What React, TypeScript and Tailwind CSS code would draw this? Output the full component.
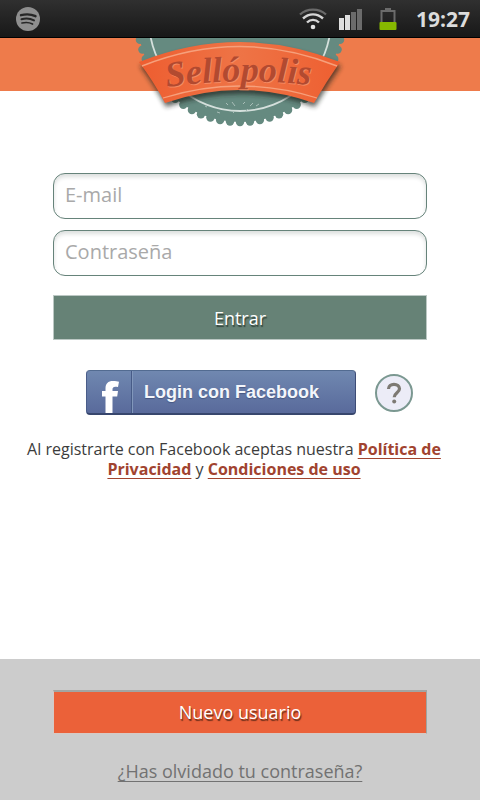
import React, { useState } from 'react';

const StatusBar = () => (
  <div className="flex h-[38px] shrink-0 items-center border-b border-black bg-linear-to-b from-[#303030] to-[#181818] pr-2.5 pl-4">
    <svg width="24" height="24" viewBox="0 0 24 24" fill="none" strokeLinecap="round">
      <circle cx="12" cy="12" r="12" fill="#8e8e8e" />
      <path d="M5 8.200C9.500 7 15.500 7.300 19.500 9.200" stroke="#262626" strokeWidth="2.400" />
      <path d="M5.500 12.300C9.500 11.200 14.500 11.600 18 13.400" stroke="#262626" strokeWidth="2" />
      <path d="M6 16C9.500 15.200 13.500 15.400 16.500 17" stroke="#262626" strokeWidth="1.700" />
    </svg>
    <div className="ml-auto flex items-center">
      <svg width="30" height="24" viewBox="0 0 30 24" fill="none">
        <path d="M2 7.500C9 1 21 1 28 7.500" stroke="#6a6a6a" strokeWidth="2.200" />
        <path d="M5 11.500C11 6 19 6 25 11.500" stroke="#d6d6d6" strokeWidth="2.400" />
        <path d="M9 15.500C12.500 12 17.500 12 21 15.500" stroke="#d6d6d6" strokeWidth="2.400" />
        <circle cx="15" cy="20" r="2.300" fill="#e2e2e2" />
      </svg>
      <svg className="ml-2.5" width="26" height="24" viewBox="0 0 26 24">
        <path d="M1 11h5v12H1zM7 8h5v15H7z" fill="#dedede" />
        <path d="M13 5h5v18h-5zM19 2h5v21h-5z" fill="#6b6b6b" />
      </svg>
      <svg className="ml-3.5" width="20" height="24" viewBox="0 0 20 24">
        <path d="M7 1h6v3H7z" fill="#6b6b6b" />
        <path d="M3.500 15V4h13v11" fill="none" stroke="#6b6b6b" strokeWidth="2" />
        <rect x="1.500" y="15" width="17" height="8" rx="1" fill="#86b800" />
      </svg>
      <span className="ml-[18px] text-[21px] leading-6 font-bold text-[#dcdcdc]">19:27</span>
    </div>
  </div>
);

// scalloped edge of the stamp
const TEETH = Array.from({ length: 64 }, (_, i) => {
  const a = (i / 64) * Math.PI * 2;
  return { x: 110 + Math.cos(a) * 102, y: -18 + Math.sin(a) * 102 };
});

const RIBBON = 'M9 24Q110 -16 210 24Q196 44 184 65Q110 39 35 65Q24 44 9 24Z';

const Logo = () => (
  <svg width="220" height="96" viewBox="0 0 220 96" role="img" aria-label="Sellópolis">
    <defs>
      <linearGradient id="ribbon" x1="0" x2="1">
        <stop offset="0" stopColor="#ee5d30" />
        <stop offset="0.500" stopColor="#ee7446" />
        <stop offset="1" stopColor="#ee5f31" />
      </linearGradient>
      <filter id="shade" x="-20%" y="-20%" width="140%" height="150%">
        <feGaussianBlur stdDeviation="2.500" />
      </filter>
      <path id="arc" d="M37 49Q110 38 198 49" />
    </defs>
    <g fill="#658a80">
      <circle cx="110" cy="-18" r="102" />
      {TEETH.map((t, i) => (
        <circle key={i} cx={t.x} cy={t.y} r="4.200" />
      ))}
    </g>
    <circle cx="110" cy="-18" r="91" fill="none" stroke="#d5e0dc" strokeWidth="1.800" />
    <path d="M96 65l2 2m4-3l3 4m8-2l2-2m5 4l3-3m-36 9l3 1m12-2l2 2m11-1l3-3m8-3l3-2m-54 2l2 1" stroke="#a9beb8" strokeWidth="1" />
    <path d={RIBBON} transform="translate(1 4)" fill="#1c211f" opacity="0.700" filter="url(#shade)" />
    <path d={RIBBON} fill="url(#ribbon)" />
    <path d="M12 28Q110 -11 207 28" fill="none" stroke="#f6a07c" strokeWidth="1.500" />
    <path d="M33 60Q110 36 187 60" fill="none" stroke="#f6a07c" strokeWidth="1.300" />
    <g fontFamily="'Liberation Serif', serif" fontSize="36" fontStyle="italic" fontWeight="700">
      <text fill="#f68a62" transform="translate(1 1)">
        <textPath href="#arc">Sellópolis</textPath>
      </text>
      <text fill="#b24a30">
        <textPath href="#arc">Sellópolis</textPath>
      </text>
    </g>
  </svg>
);

const Field = ({ label, ...props }: any) => (
  <input
    aria-label={label}
    placeholder={label}
    className="h-[46px] w-full rounded-xl border border-[#66837a] bg-white px-[11px] pb-1 text-xl text-gray-700 shadow-[inset_0_3px_4px_#dcdfde] outline-none placeholder:text-[#a9a9a9]"
    {...props}
  />
);

const FacebookButton = () => (
  <button
    type="button"
    className="flex h-[45px] w-[270px] items-stretch overflow-hidden rounded-sm border border-t-[#526b91] border-r-[#3d4c76] border-b-2 border-b-[#37466d] border-l-[#4a5d89] bg-linear-to-b from-[#7088b0] to-[#596a9b] text-left"
  >
    <svg className="shrink-0" width="46" height="42" viewBox="0 0 46 42">
      <path d="M18.500 42V25.500H15V20h3.500v-2.500C18.500 12.500 21 10 26 10c2.500 0 4.500.3 6 .8l-1 5.200c-3.800-.8-5.500-.3-5.500 2.500V20H31l-.8 5.500h-4.700V42z" fill="#fff" />
      <path d="M44.500 0v42" stroke="#475b87" />
      <path d="M45.500 0v42" stroke="#8197bb" />
    </svg>
    <span className="self-center pl-[11px] font-['Liberation_Sans',sans-serif] text-lg font-bold text-[#f3f6fb] [text-shadow:0_1px_1px_#465782]">
      Login con Facebook
    </span>
  </button>
);

const App: React.FC = () => {
  const [email, setEmail] = useState('');
  const [password, setPassword] = useState('');

  return (
    <div className="flex min-h-screen flex-col bg-white font-['Open_Sans','Noto_Sans',sans-serif]">
      <StatusBar />

      <header className="relative h-[53px] shrink-0 bg-[#ee7b4b]">
        <div className="absolute inset-x-0 top-0 flex justify-center">
          <Logo />
        </div>
      </header>

      <main className="flex-1 pt-[82px] pb-8">
        <form className="flex flex-col px-[53px]" onSubmit={(e) => e.preventDefault()}>
          <div className="flex flex-col gap-[11px]">
            <Field label="E-mail" type="email" value={email} onChange={(e: any) => setEmail(e.target.value)} />
            <Field label="Contraseña" type="password" value={password} onChange={(e: any) => setPassword(e.target.value)} />
          </div>
          <button
            type="submit"
            className="mt-[19px] h-[45px] border border-[#bcc8c4] bg-[#668276] text-lg text-white [text-shadow:1px_2px_1px_#33443c]"
          >
            Entrar
          </button>
        </form>

        <div className="mt-[30px] flex items-center justify-center gap-[19px] pl-[19px]">
          <FacebookButton />
          <button type="button" aria-label="Ayuda" className="size-[38px] rounded-full border-2 border-[#7b9891] bg-[#ececf7]">
            <svg className="mx-auto" width="20" height="26" viewBox="0 0 20 26" fill="none">
              <path d="M4.500 9C4.500 6 7 4.300 10 4.300s5.500 1.700 5.500 4.500c0 3.700-5.300 4.200-5.300 8.400" stroke="#7d7973" strokeWidth="3.200" />
              <circle cx="10.200" cy="21.500" r="2" fill="#7d7973" />
            </svg>
          </button>
        </div>

        <p className="mt-6 pr-8 pl-5 text-center text-base leading-5 text-[#3c3c3c]">
          Al registrarte con Facebook aceptas nuestra{' '}
          <a href="#privacidad" className="font-bold text-[#a1432f] underline decoration-[#a1432f] decoration-1 underline-offset-3">Política de Privacidad</a> y{' '}
          <a href="#condiciones" className="font-bold text-[#a1432f] underline decoration-[#a1432f] decoration-1 underline-offset-3">Condiciones de uso</a>
        </p>
      </main>

      <footer className="flex flex-col bg-[#cccccc] px-[53px] pt-[31px] pb-4">
        <button
          type="button"
          className="h-11 border border-t-2 border-t-[#a3a5a2] border-r-[#9fa5a2] border-b-[#d7c9c4] border-l-[#d7c9c4] bg-[#eb6139] pb-0.5 text-lg text-white [text-shadow:1px_2px_1px_#6b2d1a]"
        >
          Nuevo usuario
        </button>
        <a href="#recuperar" className="mt-6 self-center text-lg leading-[26px] text-[#727272] underline decoration-1 underline-offset-3">
          ¿Has olvidado tu contraseña?
        </a>
      </footer>
    </div>
  );
};

export default App;
